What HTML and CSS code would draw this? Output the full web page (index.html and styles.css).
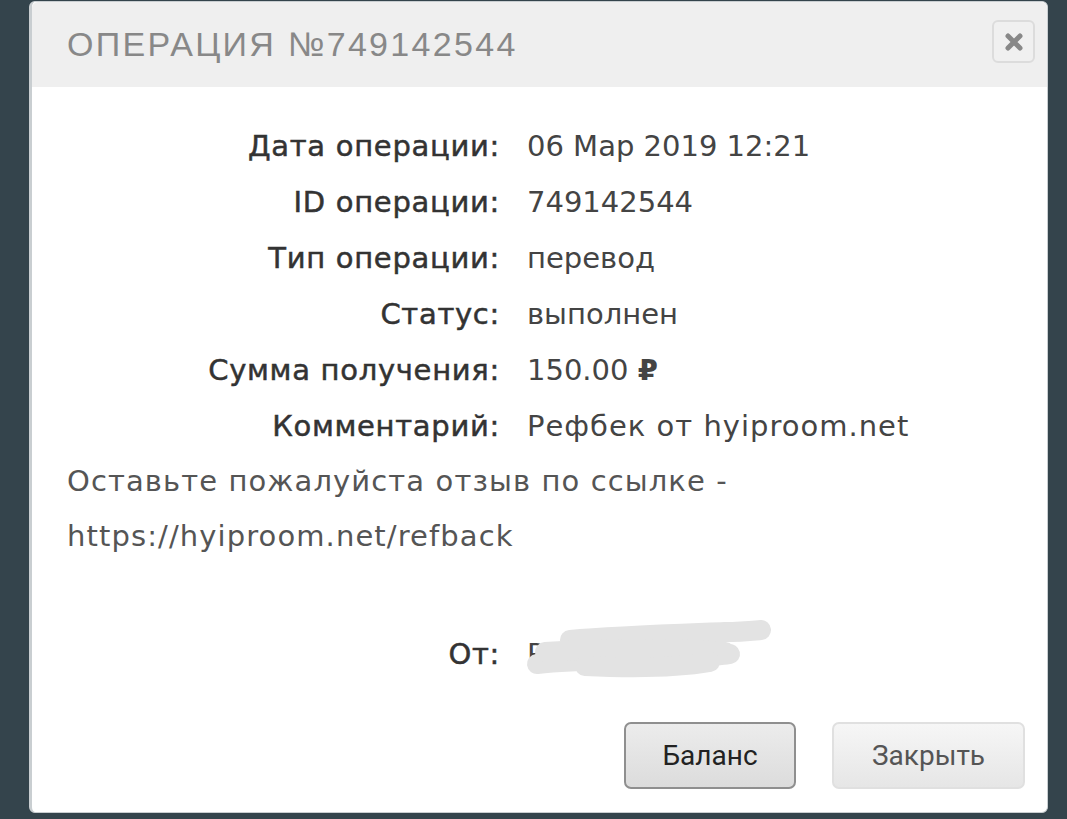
FILE: index.html
```html
<!DOCTYPE html>
<html lang="ru">
<head>
    <meta charset="UTF-8">
    <meta name="viewport" content="width=device-width, initial-scale=1.0">
    <title>Операция №749142544</title>
    <link rel="stylesheet" href="styles.css">
</head>
<body>
    <div class="modal">
        <div class="modal-header">
            <h1>Операция №749142544</h1>
            <button type="button" class="close">
                <svg width="18" height="18" viewBox="0 0 18 18"><path d="M3 3 L15 15 M15 3 L3 15" /></svg>
            </button>
        </div>
        <div class="modal-body">
            <div class="details">
                <div class="label">Дата операции:</div>
                <div class="value">06 Мар 2019 12:21</div>
                <div class="label">ID операции:</div>
                <div class="value">749142544</div>
                <div class="label">Тип операции:</div>
                <div class="value">перевод</div>
                <div class="label">Статус:</div>
                <div class="value">выполнен</div>
                <div class="label">Сумма получения:</div>
                <div class="value">150.00 <span class="rub">&#8381;</span></div>
                <div class="label">Комментарий:</div>
                <div class="value comment">Рефбек от hyiproom.net</div>
            </div>
            <p class="note">Оставьте пожалуйста отзыв по ссылке -<br>https://hyiproom.net/refback</p>
            <div class="details from">
                <div class="label">От:</div>
                <div class="value redacted">Р
                    <svg class="scribble" width="260" height="60" viewBox="0 0 260 60">
                        <path d="M12 44 C60 38 100 42 170 38 C190 36 200 35 205 34" />
                        <path d="M45 20 C90 16 150 14 200 12 C215 12 225 11 236 10" />
                        <path d="M20 32 C80 28 150 28 200 32" />
                        <path d="M60 46 C100 48 150 48 185 42" />
                    </svg>
                </div>
            </div>
        </div>
        <div class="modal-footer">
            <button type="button" class="btn btn-primary">Баланс</button>
            <button type="button" class="btn">Закрыть</button>
        </div>
    </div>
</body>
</html>
```

FILE: styles.css
```css
body {
    margin: 0;
    background-color: #34444c; /* dark slate backdrop */
    font-family: 'DejaVu Sans', sans-serif;
    height: 819px;
    overflow: hidden;
}
.modal {
    margin-left: 29px;
    margin-top: 1px;
    width: 1019px;
    height: 812px;
    background-color: #fff;
    border: 1px solid #c9ced1;
    border-left: 3px solid #c9ced1;
    border-radius: 6px;
    box-sizing: border-box;
    display: flex;
    flex-direction: column;
}
.modal-header {
    height: 85px;
    background-color: #efefef;
    border-radius: 6px 6px 0 0;
    display: flex;
    align-items: center;
    justify-content: space-between;
    padding: 0 12px 0 35px;
}
.modal-header h1 {
    margin: 0;
    font-family: 'Liberation Sans', sans-serif;
    font-weight: normal;
    font-size: 34px;
    letter-spacing: 2.3px;
    text-transform: uppercase;
    color: #888;
}
.close {
    width: 43px;
    height: 43px;
    margin-top: -6px;
    border: 2px solid #dcdcdc;
    border-radius: 6px;
    background-color: #f0f0f0;
    padding: 0;
    display: flex;
    align-items: center;
    justify-content: center;
}
.close path {
    stroke: #888;
    stroke-width: 5px;
    stroke-linecap: round;
}
.modal-body {
    padding: 31px 35px 0;
    color: #444;
    font-size: 29px;
}
.details {
    display: grid;
    grid-template-columns: 433px 1fr;
    column-gap: 27px;
    line-height: 56px;
}
.label {
    text-align: right;
    color: #333;
    -webkit-text-stroke: 0.5px #333; /* medium weight look */
    letter-spacing: 0.7px;
}
.value {
    color: #444;
}
.comment {
    letter-spacing: 1px;
}
.rub {
    font-weight: bold;
}
.note {
    margin: 0;
    line-height: 55px;
    color: #555;
    letter-spacing: 1.1px;
}
.from {
    margin-top: 62px;
}
.redacted {
    position: relative;
}
.scribble {
    position: absolute;
    left: -2px;
    top: -6px;
}
.scribble path {
    fill: none;
    stroke: #e3e3e3;
    stroke-width: 20px;
    stroke-linecap: round;
}
.modal-footer {
    display: flex;
    justify-content: flex-end;
    gap: 36px;
    padding: 40px 22px 0 0;
}
.btn {
    width: 193px;
    height: 67px;
    font-family: 'Roboto', sans-serif;
    font-size: 28px;
    color: #555;
    background: linear-gradient(#f6f6f6, #e6e6e6);
    border: 2px solid #e0e0e0;
    border-radius: 7px;
}
.btn-primary {
    width: 172px;
    color: #222;
    background: linear-gradient(#ececec, #dcdcdc);
    border-color: #8f8f8f;
}
```
